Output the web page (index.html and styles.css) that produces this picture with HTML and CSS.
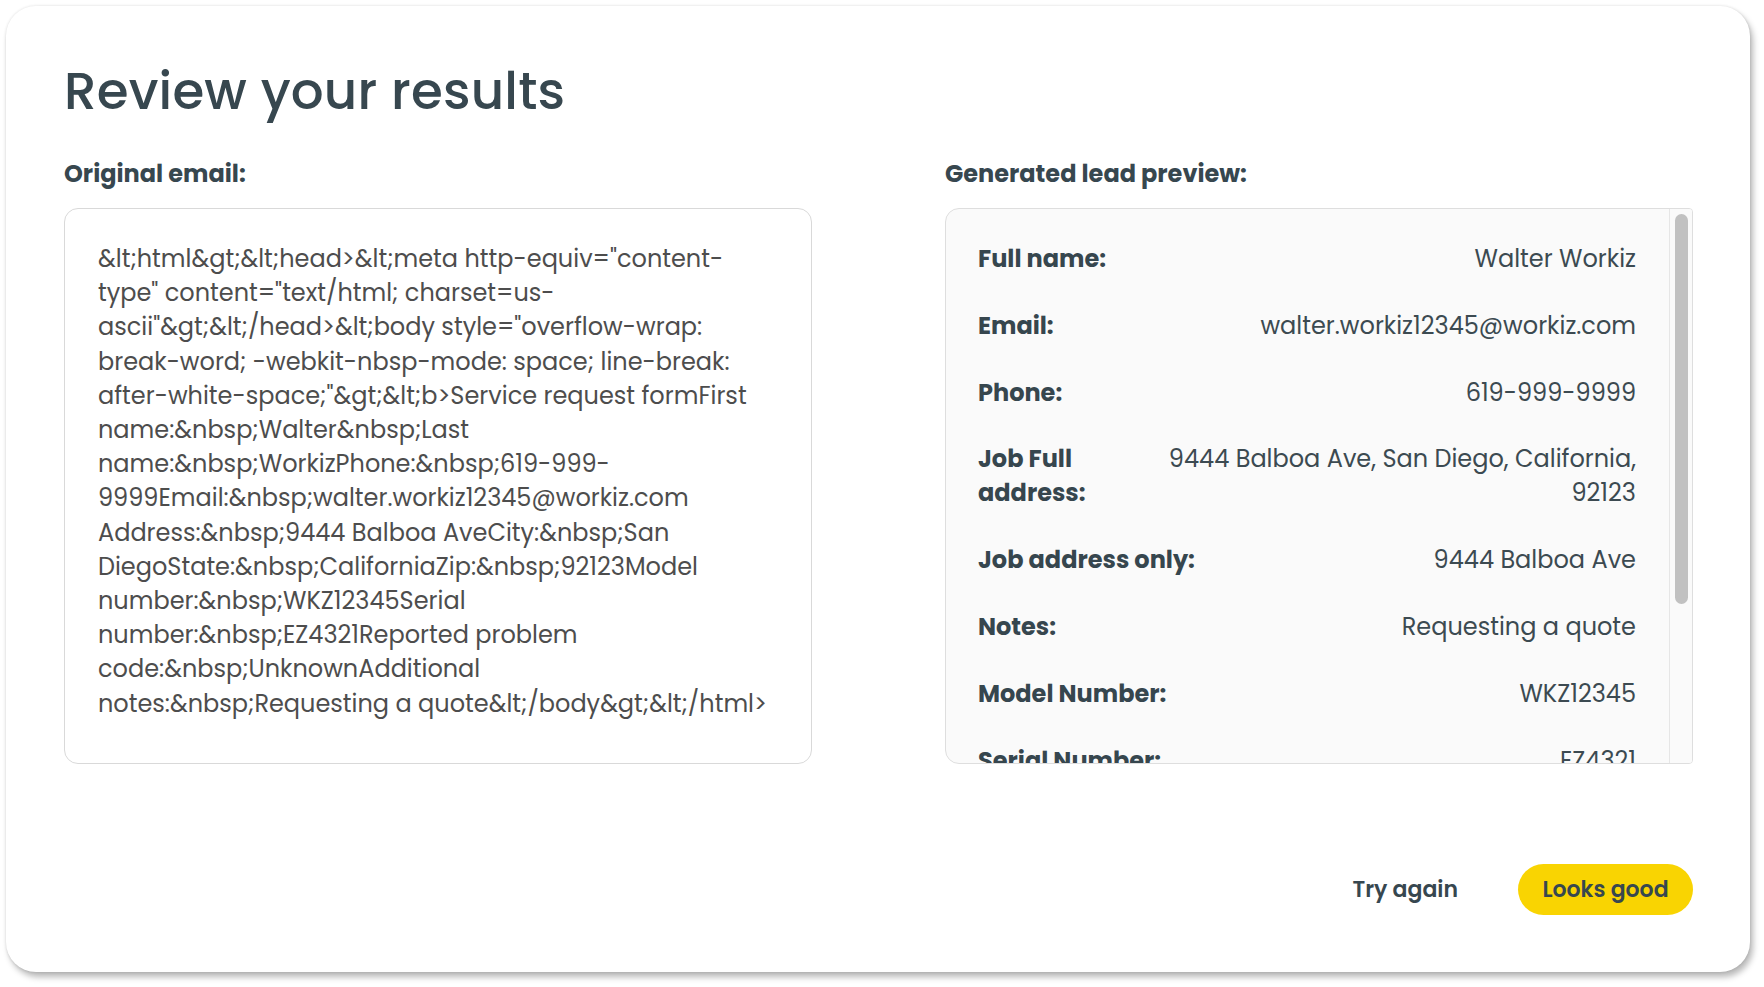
FILE: index.html
```html
<!DOCTYPE html>
<html lang="en">
<head>
<meta charset="utf-8">
<title>Review your results</title>
<link rel="stylesheet" href="styles.css">
</head>
<body>
<div class="card">
  <h1 class="title">Review your results</h1>
  <div class="columns">
    <section class="col">
      <h2 class="col-heading">Original email:</h2>
      <div class="email-box">
        <p class="email-text">&amp;lt;html&amp;gt;&amp;lt;head&gt;&amp;lt;meta http-equiv="content-<br>type" content="text/html; charset=us-<br>ascii"&amp;gt;&amp;lt;/head&gt;&amp;lt;body style="overflow-wrap:<br>break-word; -webkit-nbsp-mode: space; line-break:<br>after-white-space;"&amp;gt;&amp;lt;b&gt;Service request formFirst<br>name:&amp;nbsp;Walter&amp;nbsp;Last<br>name:&amp;nbsp;WorkizPhone:&amp;nbsp;619-999-<br>9999Email:&amp;nbsp;walter.workiz12345@workiz.com<br>Address:&amp;nbsp;9444 Balboa AveCity:&amp;nbsp;San<br>DiegoState:&amp;nbsp;CaliforniaZip:&amp;nbsp;92123Model<br>number:&amp;nbsp;WKZ12345Serial<br>number:&amp;nbsp;EZ4321Reported problem<br>code:&amp;nbsp;UnknownAdditional<br>notes:&amp;nbsp;Requesting a quote&amp;lt;/body&amp;gt;&amp;lt;/html&gt;</p>
      </div>
    </section>
    <section class="col">
      <h2 class="col-heading">Generated lead preview:</h2>
      <div class="lead-box">
        <div class="lead-list">
          <div class="lead-row"><span class="label">Full name:</span><span class="value">Walter Workiz</span></div>
          <div class="lead-row"><span class="label">Email:</span><span class="value">walter.workiz12345@workiz.com</span></div>
          <div class="lead-row"><span class="label">Phone:</span><span class="value">619-999-9999</span></div>
          <div class="lead-row"><span class="label">Job Full address:</span><span class="value">9444 Balboa Ave, San Diego, California, 92123</span></div>
          <div class="lead-row"><span class="label">Job address only:</span><span class="value">9444 Balboa Ave</span></div>
          <div class="lead-row"><span class="label">Notes:</span><span class="value">Requesting a quote</span></div>
          <div class="lead-row"><span class="label">Model Number:</span><span class="value">WKZ12345</span></div>
          <div class="lead-row"><span class="label">Serial Number:</span><span class="value">EZ4321</span></div>
          <div class="lead-row"><span class="label">Problem code:</span><span class="value">Unknown</span></div>
        </div>
        <div class="scrollbar" aria-hidden="true"><div class="scrollbar-thumb"></div></div>
      </div>
    </section>
  </div>
  <div class="actions">
    <button class="btn btn-link" type="button">Try again</button>
    <button class="btn btn-primary" type="button">Looks good</button>
  </div>
</div>
</body>
</html>
```

FILE: styles.css
```css
* { box-sizing: border-box; }

html, body {
  margin: 0;
  background: #ffffff;
}

body {
  padding: 6px 14px 15px 6px;
  font-family: "Poppins", "Noto Sans", "Open Sans", sans-serif;
  color: #37474f;
}

.card {
  width: 1744px;
  height: 966px;
  background: #ffffff;
  border-radius: 30px;
  box-shadow: 0 0 3px rgba(0, 0, 0, 0.12), 3px 5px 6px rgba(0, 0, 0, 0.28);
  padding: 49px 57px 57px 58px;
  display: flex;
  flex-direction: column;
}

.title {
  margin: 0;
  font-size: 51.5px;
  font-weight: 500;
  line-height: 72px;
  color: #37474f;
  letter-spacing: 0.2px;
}

.columns {
  display: grid;
  grid-template-columns: 748px 748px;
  column-gap: 133px;
  margin-top: 32px;
}

.col {
  display: flex;
  flex-direction: column;
}

.col-heading {
  margin: 0 0 19px 0;
  font-size: 24px;
  font-weight: 700;
  line-height: 30px;
  color: #37474f;
}

.email-box {
  height: 556px;
  border: 1px solid #d9d9d9;
  border-radius: 14px;
  background: #ffffff;
  padding: 33px 20px 32px 33px;
}

.email-text {
  margin: 0;
  font-size: 24px;
  line-height: 34.2px;
  color: #4d4d4d;
}

.lead-box {
  height: 556px;
  border: 1px solid #dedede;
  border-radius: 14px 4px 4px 14px;
  background: #fafafa;
  display: flex;
  overflow: hidden;
}

.lead-list {
  flex: 1;
  min-width: 0;
  overflow: hidden;
  padding: 33px 33px 0 32px;
  display: flex;
  flex-direction: column;
  gap: 32.8px;
}

.lead-row {
  display: flex;
  justify-content: space-between;
  flex-shrink: 0;
  font-size: 24px;
  line-height: 34px;
}

.label {
  font-weight: 700;
  color: #36464e;
  flex: 0 1 auto;
}

.value {
  text-align: right;
  color: #3c4a51;
  flex: 0 1 auto;
}

.scrollbar {
  width: 23px;
  flex-shrink: 0;
  border-left: 1px solid #e6e6e6;
  background: #fafafa;
  padding: 5px 4px 0 5px;
}

.scrollbar-thumb {
  height: 390px;
  background: #c1c1c1;
  border-radius: 7px;
}

.actions {
  margin-top: auto;
  display: flex;
  justify-content: flex-end;
  align-items: center;
  gap: 36px;
}

.btn {
  font-family: inherit;
  font-size: 22px;
  font-weight: 600;
  color: #37474f;
  border: none;
  cursor: pointer;
  height: 51px;
  border-radius: 26px;
}

.btn-link {
  background: transparent;
  padding: 0 24px;
}

.btn-primary {
  background: #f9d402;
  width: 175px;
  padding: 0;
}
```
